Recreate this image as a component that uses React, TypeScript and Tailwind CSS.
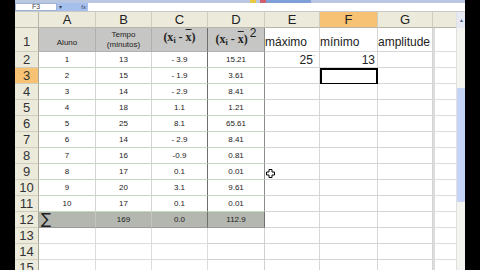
const cols = [
  { key: 'A', w: 'w-[57px]' },
  { key: 'B', w: 'w-[56px]' },
  { key: 'C', w: 'w-[56px]' },
  { key: 'D', w: 'w-[57px]' },
  { key: 'E', w: 'w-[55px]' },
  { key: 'F', w: 'w-[58px]' },
  { key: 'G', w: 'w-[55px]' },
];

const data = [
  ['1', '13', '- 3.9', '15.21'],
  ['2', '15', '- 1.9', '3.61'],
  ['3', '14', '- 2.9', '8.41'],
  ['4', '18', '1.1', '1.21'],
  ['5', '25', '8.1', '65.61'],
  ['6', '14', '- 2.9', '8.41'],
  ['7', '16', '-0.9', '0.81'],
  ['8', '17', '0.1', '0.01'],
  ['9', '20', '3.1', '9.61'],
  ['10', '17', '0.1', '0.01'],
];

function RowHead({ n, active, tall }: { n: number; active?: boolean; tall?: boolean }) {
  return (
    <div
      className={`w-[24px] shrink-0 flex justify-center border-r border-b border-r-[#a8a694] border-b-[#cfcdbd] text-[13px] leading-none text-[#333] ${
        tall ? 'items-end pb-[3px]' : 'items-center'
      } ${active ? 'bg-[#f7c273]' : 'bg-[#ebeadb]'}`}
    >
      {n}
    </div>
  );
}

function Xbar() {
  return <span className="overline">x</span>;
}

function Tail({ selected }: { selected?: boolean }) {
  // columns E..H for an ordinary row
  return (
    <>
      <div className="w-[55px] border-r border-b border-[#d6d6d6]" />
      <div className={`w-[58px] border-b ${selected ? 'border-2 border-black' : 'border-r border-[#d6d6d6]'}`} />
      <div className="w-[55px] border-r border-b border-[#d6d6d6]" />
      <div className="w-[23px] border-l-2 border-b border-[#dcdcdc]" />
    </>
  );
}

export default function App() {
  return (
    <div className="w-[480px] h-[270px] flex bg-black overflow-hidden font-['Liberation_Sans',Arial,sans-serif]">
      <div className="w-[15px] shrink-0" />
      <div className="w-[450px] shrink-0 flex flex-col bg-white relative overflow-hidden">
        {/* formula bar */}
        <div className="h-[3px] shrink-0 bg-[#b9c7e0] flex">
          <div className="w-[235px]" />
          <div className="w-[6px] bg-[#e8c840]" />
          <div className="w-[4px]" />
          <div className="w-[6px] bg-[#d06070]" />
          <div className="w-[45px] bg-[#7f9fd8]" />
        </div>
        <div className="h-[9px] shrink-0 flex border-b border-[#c8c8c8]">
          <div className="w-[42px] border border-[#9fb3d6] bg-white text-[7px] leading-[6px] text-[#444] flex items-center justify-center">
            F3
          </div>
          <div className="w-[31px] bg-[#a6c0ee] flex items-center justify-between px-[2px] text-[6px] leading-none text-[#345]">
            <span>▾</span>
            <span>fx</span>
          </div>
          <div className="flex-1 bg-white" />
        </div>

        <div className="flex shrink-0">
          {/* grid */}
          <div className="w-[441px] shrink-0 flex flex-col">
            {/* column headers */}
            <div className="h-[16px] shrink-0 flex bg-[#ebeadb] text-[13px] leading-none text-[#222]">
              <div className="w-[24px] border-r border-b border-[#b8b6a8]" />
              {cols.map((c) => (
                <div
                  key={c.key}
                  className={`${c.w} flex items-center justify-center border-r border-b border-r-[#cfcdbd] border-b-[#b8b6a8] ${
                    c.key === 'F' ? 'bg-[#f7c273]' : ''
                  }`}
                >
                  {c.key}
                </div>
              ))}
              <div className="w-[23px] border-b border-[#b8b6a8]" />
            </div>

            {/* row 1 */}
            <div className="h-[24px] shrink-0 flex">
              <RowHead n={1} tall />
              <div className="w-[57px] bg-[#c6c6c4] border-r border-b border-[#b0b0b0] flex items-end justify-center pb-[4px] text-[8px] leading-none text-[#222]">
                Aluno
              </div>
              <div className="w-[56px] bg-[#c6c6c4] border-r border-b border-[#b0b0b0] flex flex-col items-center justify-center text-[8px] leading-[10px] text-[#222]">
                <span>Tempo</span>
                <span>(minutos)</span>
              </div>
              <div className="w-[56px] bg-[#c6c6c4] border-r border-b border-r-[#6e6e6e] border-b-[#b0b0b0] flex items-start justify-center pt-[3px] font-['Liberation_Serif',serif] font-bold text-[12px] leading-none text-[#222]">
                <span>
                  (x<sub className="text-[8px]">i</sub> - <Xbar />)
                </span>
              </div>
              <div className="w-[57px] bg-[#c6c6c4] border-r border-b border-r-[#8c8c8c] border-b-[#b0b0b0] flex items-start justify-center pt-[5px] font-['Liberation_Serif',serif] font-bold text-[12px] leading-none text-[#222]">
                <span>
                  (x<sub className="text-[8px]">i</sub> - <Xbar />)
                  <sup className="text-[12px] font-normal font-['Liberation_Sans',sans-serif] ml-[2px]">2</sup>
                </span>
              </div>
              <div className="w-[55px] border-r border-b border-[#d6d6d6] flex items-end pb-[3px] text-[12px] leading-none text-[#222]">
                máximo
              </div>
              <div className="w-[58px] border-r border-b border-[#d6d6d6] flex items-end pb-[3px] text-[12px] leading-none text-[#222]">
                mínimo
              </div>
              <div className="w-[55px] border-r border-b border-[#d6d6d6] flex items-end pb-[3px] text-[12px] leading-none text-[#222]">
                amplitude
              </div>
              <div className="w-[23px] border-l-2 border-b border-[#dcdcdc]" />
            </div>

            {/* data rows 2..11 */}
            {data.map((r, i) => (
              <div key={i} className="h-[16px] shrink-0 flex text-[8px] leading-none text-[#222]">
                <RowHead n={i + 2} active={i === 1} />
                <div className="w-[57px] border-r border-b border-r-[#d4d4d4] border-b-[#c5dbbd] flex items-center justify-center">{r[0]}</div>
                <div className="w-[56px] border-r border-b border-r-[#d4d4d4] border-b-[#c5dbbd] flex items-center justify-center">{r[1]}</div>
                <div className="w-[56px] border-r border-b border-r-[#6e6e6e] border-b-[#c5dbbd] flex items-center justify-center">{r[2]}</div>
                <div className="w-[57px] border-r border-b border-r-[#8c8c8c] border-b-[#c5dbbd] flex items-center justify-center">{r[3]}</div>
                {i === 0 ? (
                  <>
                    <div className="w-[55px] border-r border-b border-[#d6d6d6] flex items-center justify-end pr-[4px] text-[12px] text-[#222]">
                      25<span className="text-[6px] self-start mt-[2px] ml-[1px] text-[#777]">'</span>
                    </div>
                    <div className="w-[58px] border-r border-b border-[#d6d6d6] flex items-center justify-end pr-[2px] text-[12px] text-[#222]">
                      13
                    </div>
                    <div className="w-[55px] border-r border-b border-[#d6d6d6]" />
                    <div className="w-[23px] border-l-2 border-b border-[#dcdcdc]" />
                  </>
                ) : (
                  <Tail selected={i === 1} />
                )}
              </div>
            ))}

            {/* row 12 */}
            <div className="h-[16px] shrink-0 flex text-[8px] leading-none text-[#222]">
              <RowHead n={12} />
              <div className="w-[57px] bg-[#b4b7b0] border-r border-b border-r-[#c4c4c4] border-b-[#9a9a9a] flex items-center pl-[2px] text-[15px] font-['DejaVu_Sans',sans-serif]">
                ∑
              </div>
              <div className="w-[56px] bg-[#b4b7b0] border-r border-b border-r-[#c4c4c4] border-b-[#9a9a9a] flex items-center justify-center">169</div>
              <div className="w-[56px] bg-[#b4b7b0] border-r border-b border-r-[#6e6e6e] border-b-[#9a9a9a] flex items-center justify-center">0.0</div>
              <div className="w-[57px] bg-[#b4b7b0] border-r border-b border-r-[#6e6e6e] border-b-[#9a9a9a] flex items-center justify-center">112.9</div>
              <Tail />
            </div>

            {/* rows 13..15 */}
            {[13, 14, 15].map((n) => (
              <div key={n} className="h-[16px] flex shrink-0">
                <RowHead n={n} />
                <div className="w-[57px] border-r border-b border-[#dcdcdc]" />
                <div className="w-[56px] border-r border-b border-[#dcdcdc]" />
                <div className="w-[56px] border-r border-b border-[#dcdcdc]" />
                <div className="w-[57px] border-r border-b border-[#d0d0d0]" />
                <Tail />
              </div>
            ))}
          </div>

          {/* vertical scrollbar */}
          <div className="w-[9px] shrink-0 flex flex-col bg-[#f3f3ef] border-l border-[#e0e0e0]">
            <div className="h-[16px] flex items-center justify-center text-[6px] leading-none text-[#4d6185] bg-[#e4e9f4]">▴</div>
            <div className="h-[60px]" />
            <div className="h-[114px] bg-[#c4d3f6] rounded-[1px]" />
            <div className="flex-1" />
          </div>
        </div>

        {/* mouse cursor */}
        <svg className="absolute left-[251px] top-[169px]" width="9" height="9" viewBox="0 0 9 9">
          <path d="M3 0.5h3v2.5h2.5v3H6v2.5H3V6H0.5V3H3z" fill="#fff" stroke="#000" strokeWidth="1" />
        </svg>
      </div>
      <div className="flex-1" />
    </div>
  );
}
